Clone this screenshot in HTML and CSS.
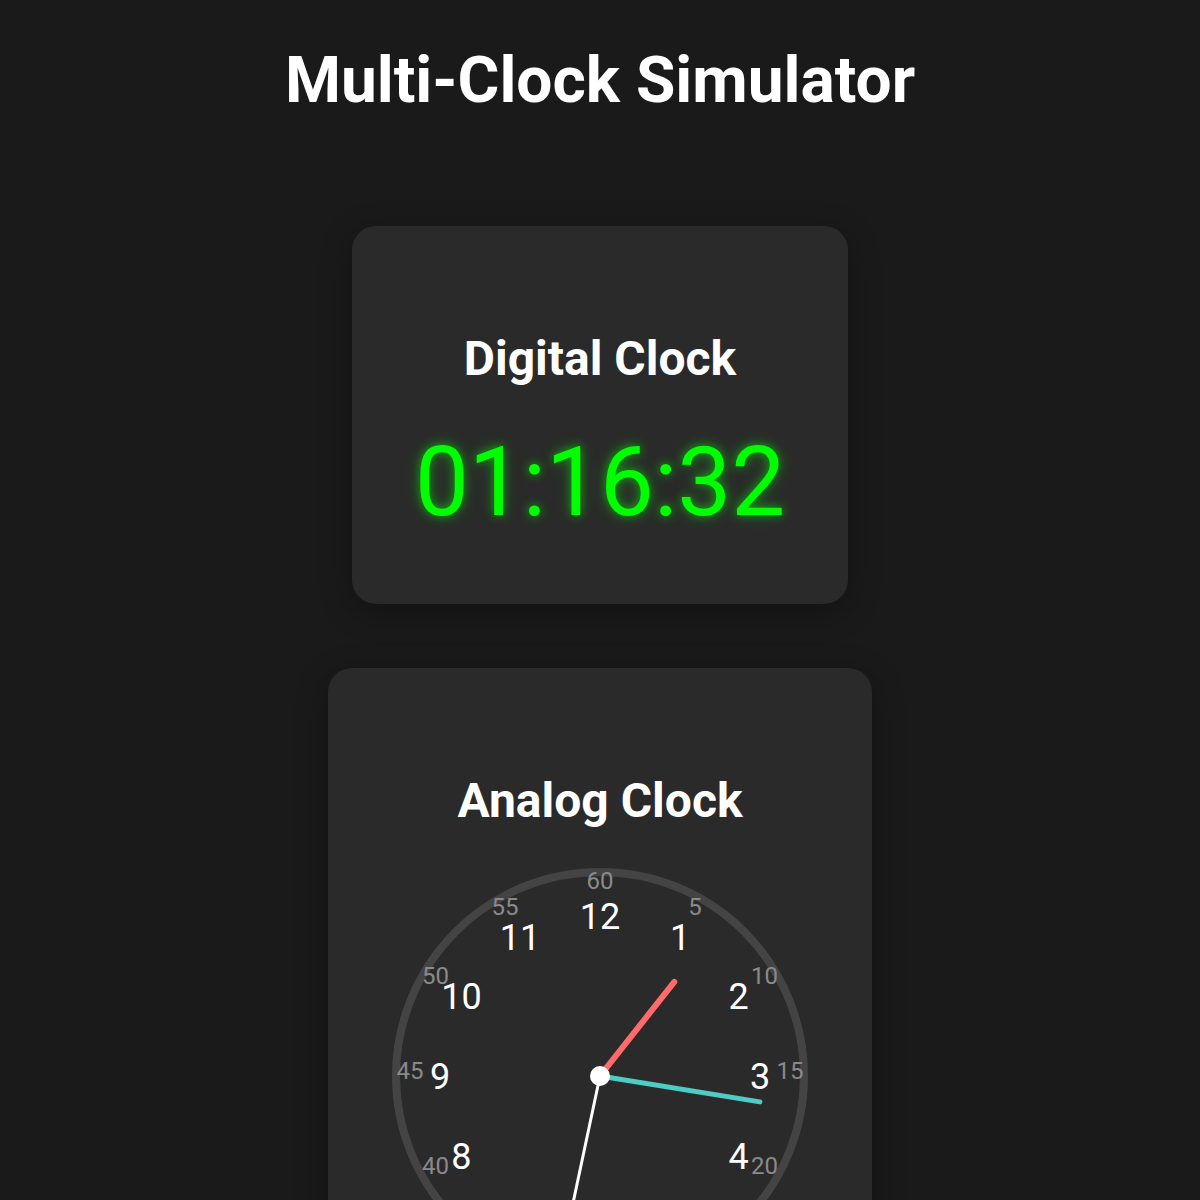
FILE: index.html
```html
<!DOCTYPE html>
<html lang="en">
<head>
    <meta charset="UTF-8">
    <meta name="viewport" content="width=device-width, initial-scale=1.0">
    <title>Multi-Clock Simulator</title>
    <link rel="stylesheet" href="styles.css">
</head>
<body>

<h1 class="page-title">Multi-Clock Simulator</h1>

<main class="clock-list">
    <!-- 디지털 시계 -->
    <section class="clock-card">
        <h2>Digital Clock</h2>
        <div class="digital-time" id="digitalTime">01:16:32</div>
    </section>

    <!-- 아날로그 시계 -->
    <section class="clock-card">
        <h2>Analog Clock</h2>
        <svg class="analog-face" id="analogFace" width="416" height="416" viewBox="0 0 416 416">
            <circle class="face-ring" cx="208" cy="208" r="204"></circle>
            <g id="faceNumbers"></g>
            <line id="hourHand" class="hand hand-hour" x1="208" y1="208" x2="208" y2="88"></line>
            <line id="minuteHand" class="hand hand-minute" x1="208" y1="208" x2="208" y2="46"></line>
            <line id="secondHand" class="hand hand-second" x1="208" y1="208" x2="208" y2="28"></line>
            <circle class="hand-pin" cx="208" cy="208" r="10"></circle>
        </svg>
    </section>
</main>

<script>
    const SVG_NS = 'http://www.w3.org/2000/svg';
    const CX = 208;
    const CY = 208;
    const numbers = document.getElementById('faceNumbers');

    // 각도(도) 와 반지름으로 좌표 계산
    function point(deg, r) {
        const rad = deg * Math.PI / 180;
        return { x: CX + r * Math.sin(rad), y: CY - r * Math.cos(rad) };
    }

    function addText(label, x, y, cls) {
        const t = document.createElementNS(SVG_NS, 'text');
        t.setAttribute('x', x.toFixed(1));
        t.setAttribute('y', y.toFixed(1));
        t.setAttribute('class', cls);
        t.textContent = label;
        numbers.appendChild(t);
    }

    // 시 / 분 숫자 배치
    for (let i = 1; i <= 12; i++) {
        const h = point(i * 30, 160);
        addText(String(i), h.x, h.y + 12.5, 'num-hour');

        const m = point(i * 30, 190);
        addText(String(i * 5), m.x, m.y + 3, 'num-minute');
    }

    function setHand(id, deg, len) {
        const p = point(deg, len);
        const hand = document.getElementById(id);
        hand.setAttribute('x2', p.x.toFixed(1));
        hand.setAttribute('y2', p.y.toFixed(1));
    }

    // 스크린샷 시점의 시각으로 고정
    const hours = 1, minutes = 16, seconds = 32;
    const minuteValue = minutes + seconds / 60;
    setHand('hourHand', (hours % 12 + minuteValue / 60) * 30, 120);
    setHand('minuteHand', minuteValue * 6, 162);
    setHand('secondHand', seconds * 6, 180);
</script>

</body>
</html>
```

FILE: styles.css
```css
body {
    font-family: Roboto, "Noto Sans", "Liberation Sans", sans-serif;
    background-color: #1a1a1a;
    color: #ffffff;
    margin: 0;
    padding: 0 0 60px 0;
    display: flex;
    flex-direction: column;
    align-items: center;
}

.page-title {
    font-size: 64px;
    font-weight: 700;
    margin: 43px 0 108px 0;
    text-align: center;
}

/* 시계 카드 목록 */
.clock-list {
    display: flex;
    flex-direction: column;
    align-items: center;
    gap: 64px;
}

.clock-card {
    background-color: #2a2a2a;
    border-radius: 24px;
    padding: 104px 63px 66px 63px;
    box-shadow: 0 8px 32px rgba(0, 0, 0, 0.3);
    display: flex;
    flex-direction: column;
    align-items: center;
}

.clock-card h2 {
    font-size: 48px;
    font-weight: 700;
    margin: 0 0 39px 0;
}

/* 디지털 시계 */
.digital-time {
    font-size: 96px;
    font-weight: 400;
    color: #00ff00;
    text-shadow: 0 0 10px rgba(0, 255, 0, 0.6), 0 0 20px rgba(0, 255, 0, 0.2);
}

/* 아날로그 시계 */
.analog-face {
    display: block;
    margin: 0 1px;
}

.face-ring {
    fill: none;
    stroke: #444444;
    stroke-width: 8;
}

.num-hour {
    font-family: Roboto, "Noto Sans", sans-serif;
    font-size: 36px;
    fill: #ffffff;
    text-anchor: middle;
}

.num-minute {
    font-family: Roboto, "Noto Sans", sans-serif;
    font-size: 24px;
    fill: #8a8a8a;
    text-anchor: middle;
}

.hand {
    stroke-linecap: round;
}

.hand-hour {
    stroke: #ff6b6b;
    stroke-width: 6;
}

.hand-minute {
    stroke: #4ecdc4;
    stroke-width: 5;
}

.hand-second {
    stroke: #ffffff;
    stroke-width: 3;
}

.hand-pin {
    fill: #ffffff;
}
```
